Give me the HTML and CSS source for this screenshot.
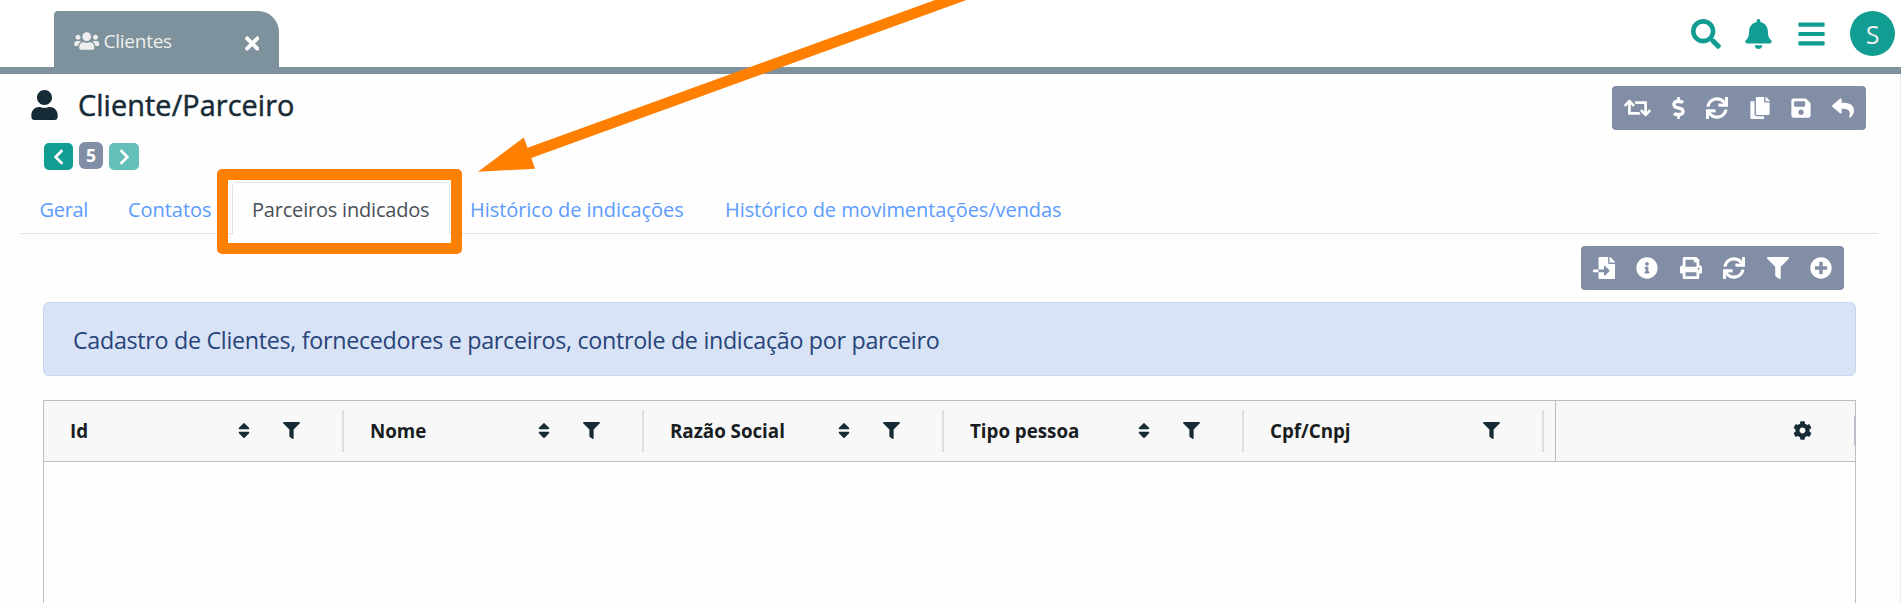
FILE: index.html
```html
<!DOCTYPE html>
<html lang="pt-BR">
<head>
<meta charset="utf-8">
<title>Cliente/Parceiro</title>
<link rel="stylesheet" href="styles.css">
</head>
<body>
<svg class="sprite" aria-hidden="true">
  <symbol id="users" viewBox="0 0 640 512"><path d="M96 224c35.3 0 64-28.7 64-64s-28.7-64-64-64-64 28.7-64 64 28.7 64 64 64zm448 0c35.3 0 64-28.7 64-64s-28.7-64-64-64-64 28.7-64 64 28.7 64 64 64zm32 32h-64c-17.6 0-33.5 7.1-45.1 18.6 40.3 22.1 68.9 62 75.1 109.4h66c17.7 0 32-14.3 32-32v-32c0-35.3-28.7-64-64-64zm-256 0c61.9 0 112-50.1 112-112S381.9 32 320 32 208 82.1 208 144s50.1 112 112 112zm76.8 32h-8.3c-20.8 10-43.9 16-68.5 16s-47.6-6-68.5-16h-8.3C179.6 288 128 339.6 128 403.2V432c0 26.500 21.500 48 48 48h288c26.500 0 48-21.500 48-48v-28.800c0-63.600-51.600-115.200-115.200-115.200zm-223.700-13.400C161.500 263.100 145.600 256 128 256H64c-35.300 0-64 28.700-64 64v32c0 17.700 14.300 32 32 32h65.900c6.300-47.400 34.900-87.300 75.200-109.400z"/></symbol>
  <symbol id="user" viewBox="0 0 448 512"><path d="M224 256c70.7 0 128-57.3 128-128S294.7 0 224 0 96 57.3 96 128s57.3 128 128 128zm89.6 32h-16.7c-22.2 10.2-46.9 16-72.9 16s-50.6-5.8-72.9-16h-16.7C60.2 288 0 348.2 0 422.4V464c0 26.5 21.5 48 48 48h352c26.5 0 48-21.5 48-48v-41.6c0-74.2-60.2-134.4-134.4-134.4z"/></symbol>
  <symbol id="times" viewBox="0 0 352 512"><path d="M242.72 256l100.07-100.07c12.28-12.28 12.28-32.19 0-44.48l-22.24-22.24c-12.28-12.28-32.19-12.28-44.48 0L176 189.28 75.93 89.21c-12.28-12.28-32.19-12.28-44.48 0L9.21 111.45c-12.28 12.28-12.28 32.19 0 44.48L109.28 256 9.21 356.07c-12.28 12.28-12.28 32.19 0 44.48l22.24 22.24c12.28 12.28 32.2 12.28 44.48 0L176 322.72l100.07 100.07c12.28 12.28 32.2 12.28 44.48 0l22.24-22.24c12.28-12.28 12.28-32.19 0-44.48L242.72 256z"/></symbol>
  <symbol id="search" viewBox="0 0 512 512"><path d="M505 442.7L405.3 343c-4.5-4.5-10.6-7-17-7H372c27.6-35.3 44-79.7 44-128C416 93.1 322.9 0 208 0S0 93.1 0 208s93.1 208 208 208c48.3 0 92.700-16.400 128-44v16.300c0 6.400 2.500 12.500 7 17l99.700 99.700c9.400 9.400 24.600 9.400 33.900 0l28.300-28.300c9.400-9.400 9.400-24.600.1-34zM208 336c-70.700 0-128-57.200-128-128 0-70.700 57.200-128 128-128 70.700 0 128 57.200 128 128 0 70.700-57.200 128-128 128z"/></symbol>
  <symbol id="bell" viewBox="0 0 448 512"><path d="M224 512c35.320 0 63.970-28.650 63.970-64H160.030c0 35.350 28.650 64 63.970 64zm215.390-149.710c-19.320-20.760-55.470-51.990-55.470-154.290 0-77.700-54.480-139.900-127.940-155.160V32c0-17.670-14.320-32-31.980-32s-31.980 14.330-31.980 32v20.840C118.560 68.100 64.080 130.300 64.080 208c0 102.300-36.150 133.530-55.470 154.290-6 6.450-8.660 14.160-8.610 21.710.11 16.400 12.980 32 32.100 32h383.800c19.120 0 32-15.600 32.100-32 .05-7.550-2.610-15.270-8.610-21.710z"/></symbol>
  <symbol id="bars" viewBox="0 0 448 512"><path d="M16 132h416c8.840 0 16-7.160 16-16V76c0-8.840-7.160-16-16-16H16C7.160 60 0 67.160 0 76v40c0 8.840 7.160 16 16 16zm0 160h416c8.840 0 16-7.160 16-16v-40c0-8.840-7.160-16-16-16H16c-8.840 0-16 7.160-16 16v40c0 8.840 7.160 16 16 16zm0 160h416c8.840 0 16-7.160 16-16v-40c0-8.840-7.160-16-16-16H16c-8.840 0-16 7.160-16 16v40c0 8.840 7.160 16 16 16z"/></symbol>
  <symbol id="retweet" viewBox="0 0 640 512"><path d="M629.657 343.598L528.971 444.284c-9.373 9.372-24.568 9.372-33.941 0L394.343 343.598c-9.373-9.373-9.373-24.569 0-33.941l10.823-10.823c9.562-9.562 25.133-9.340 34.419.492L480 342.118V160H292.451a24.005 24.005 0 0 1-16.971-7.029l-16-16C244.361 121.851 255.069 96 276.451 96H520c13.255 0 24 10.745 24 24v222.118l40.416-42.792c9.285-9.831 24.856-10.054 34.419-.492l10.823 10.823c9.372 9.372 9.372 24.569-.001 33.941zm-265.138 15.431A23.999 23.999 0 0 0 347.548 352H160V169.881l40.416 42.792c9.286 9.831 24.856 10.054 34.419.491l10.822-10.822c9.373-9.373 9.373-24.569 0-33.941L144.971 67.716c-9.373-9.373-24.569-9.373-33.941 0L10.343 168.402c-9.373 9.373-9.373 24.569 0 33.941l10.822 10.822c9.562 9.562 25.133 9.340 34.419-.491L96 169.881V392c0 13.255 10.745 24 24 24h243.549c21.382 0 32.090-25.851 16.971-40.971l-16.001-16z"/></symbol>
  <symbol id="dollar" viewBox="0 0 288 512"><path d="M209.2 233.4l-108-31.6C88.700 198.200 80 186.500 80 173.500c0-16.300 13.200-29.500 29.500-29.500h66.300c12.200 0 24.200 3.700 34.200 10.500 6.100 4.100 14.300 3.100 19.500-2l34.800-34c7.100-6.900 6.100-18.400-1.800-24.500C238 74.800 207.400 64.100 176 64V16c0-8.800-7.200-16-16-16h-32c-8.800 0-16 7.200-16 16v48h-2.500C45.800 64-5.400 118.700.5 183.600c4.200 46.100 39.400 83.600 83.800 96.600l102.500 30c12.500 3.700 21.200 15.300 21.200 28.300 0 16.300-13.200 29.500-29.500 29.500h-66.300C100 368 88 364.300 78 357.500c-6.100-4.100-14.300-3.100-19.500 2l-34.800 34c-7.100 6.900-6.100 18.400 1.800 24.500 24.500 19.200 55.100 29.900 86.500 30v48c0 8.800 7.200 16 16 16h32c8.800 0 16-7.200 16-16v-48.200c46.600-.9 90.300-28.600 105.700-72.700 21.500-61.600-14.600-124.800-72.500-141.700z"/></symbol>
  <symbol id="sync" viewBox="0 0 512 512"><path d="M440.65 12.57l4 82.77A247.16 247.16 0 0 0 255.83 8C134.73 8 33.91 94.92 12.29 209.82A12 12 0 0 0 24.09 224h49.05a12 12 0 0 0 11.67-9.26 175.91 175.91 0 0 1 317-56.94l-101.46-4.86a12 12 0 0 0-12.57 12v47.41a12 12 0 0 0 12 12H500a12 12 0 0 0 12-12V12a12 12 0 0 0-12-12h-47.37a12 12 0 0 0-11.98 12.57zM255.83 432a175.61 175.61 0 0 1-146-77.8l101.8 4.87a12 12 0 0 0 12.57-12v-47.4a12 12 0 0 0-12-12H12a12 12 0 0 0-12 12V500a12 12 0 0 0 12 12h47.35a12 12 0 0 0 12-12.6l-4.15-82.57A247.17 247.17 0 0 0 255.83 504c121.11 0 221.93-86.92 243.55-201.82a12 12 0 0 0-11.8-14.18h-49.05a12 12 0 0 0-11.67 9.26A175.86 175.86 0 0 1 255.83 432z"/></symbol>
  <symbol id="copy" viewBox="0 0 448 512"><path d="M320 448v40c0 13.255-10.745 24-24 24H24c-13.255 0-24-10.745-24-24V120c0-13.255 10.745-24 24-24h72v296c0 30.879 25.121 56 56 56h168zm0-344V0H152c-13.255 0-24 10.745-24 24v368c0 13.255 10.745 24 24 24h272c13.255 0 24-10.745 24-24V128H344c-13.200 0-24-10.800-24-24zm120.971-31.029L375.029 7.029A24 24 0 0 0 358.059 0H352v96h96v-6.059a24 24 0 0 0-7.029-16.970z"/></symbol>
  <symbol id="save" viewBox="0 0 448 512"><path d="M433.941 129.941l-83.882-83.882A48 48 0 0 0 316.118 32H48C21.490 32 0 53.490 0 80v352c0 26.510 21.490 48 48 48h352c26.510 0 48-21.490 48-48V163.882a48 48 0 0 0-14.059-33.941zM224 416c-35.346 0-64-28.654-64-64 0-35.346 28.654-64 64-64s64 28.654 64 64c0 35.346-28.654 64-64 64zm96-304.520V212c0 6.627-5.373 12-12 12H76c-6.627 0-12-5.373-12-12V108c0-6.627 5.373-12 12-12h228.520c3.183 0 6.235 1.264 8.485 3.515l3.480 3.480A11.996 11.996 0 0 1 320 111.480z"/></symbol>
  <symbol id="reply" viewBox="0 0 512 512"><path d="M8.309 189.836L184.313 37.851C199.719 24.546 224 35.347 224 56.015v80.053c160.629 1.839 288 34.032 288 186.258 0 61.441-39.581 122.309-83.333 154.132-13.653 9.931-33.111-2.533-28.077-18.631 45.344-145.012-21.507-183.510-176.590-185.742V360c0 20.700-24.300 31.453-39.687 18.164l-176.004-152c-11.071-9.562-11.086-26.753 0-36.328z"/></symbol>
  <symbol id="import" viewBox="0 0 512 512"><path d="M16 288c-8.800 0-16 7.200-16 16v32c0 8.800 7.200 16 16 16h112v-64zm489-183L407.100 7c-4.500-4.500-10.600-7-17-7H384v128h128v-6.100c0-6.300-2.500-12.400-7-16.900zm-153 31V0H152c-13.300 0-24 10.700-24 24v264h128v-65.200c0-14.300 17.300-21.400 27.400-11.300L379 308c6.600 6.700 6.600 17.400 0 24l-95.700 96.400c-10.100 10.100-27.400 3-27.400-11.300V352H128v136c0 13.300 10.700 24 24 24h336c13.300 0 24-10.700 24-24V160H376c-13.200 0-24-10.800-24-24z"/></symbol>
  <symbol id="info" viewBox="0 0 512 512"><path d="M256 8C119.043 8 8 119.083 8 256c0 136.997 111.043 248 248 248s248-111.003 248-248C504 119.083 392.957 8 256 8zm0 110c23.196 0 42 18.804 42 42s-18.804 42-42 42-42-18.804-42-42 18.804-42 42-42zm56 254c0 6.627-5.373 12-12 12h-88c-6.627 0-12-5.373-12-12v-24c0-6.627 5.373-12 12-12h12v-64h-12c-6.627 0-12-5.373-12-12v-24c0-6.627 5.373-12 12-12h64c6.627 0 12 5.373 12 12v100h12c6.627 0 12 5.373 12 12v24z"/></symbol>
  <symbol id="print" viewBox="0 0 512 512"><path d="M448 192V77.250c0-8.490-3.370-16.620-9.370-22.630L393.370 9.370c-6-6-14.140-9.370-22.630-9.370H96C78.330 0 64 14.330 64 32v160c-35.350 0-64 28.650-64 64v112c0 8.840 7.160 16 16 16h48v96c0 17.670 14.330 32 32 32h320c17.670 0 32-14.330 32-32v-96h48c8.840 0 16-7.160 16-16V256c0-35.350-28.650-64-64-64zm-64 256H128v-96h256v96zm0-224H128V64h192v48c0 8.840 7.160 16 16 16h48v96zm48 72c-13.250 0-24-10.750-24-24 0-13.260 10.750-24 24-24s24 10.740 24 24c0 13.250-10.750 24-24 24z"/></symbol>
  <symbol id="filter" viewBox="0 0 512 512"><path d="M487.976 0H24.028C2.710 0-8.047 25.866 7.058 40.971L192 225.941V432c0 7.831 3.821 15.170 10.237 19.662l80 55.980C298.020 518.690 320 507.493 320 487.980V225.941l184.947-184.970C520.021 25.896 509.338 0 487.976 0z"/></symbol>
  <symbol id="plus" viewBox="0 0 512 512"><path d="M256 8C119 8 8 119 8 256s111 248 248 248 248-111 248-248S393 8 256 8zm144 276c0 6.600-5.400 12-12 12h-92v92c0 6.600-5.400 12-12 12h-56c-6.600 0-12-5.400-12-12v-92h-92c-6.600 0-12-5.400-12-12v-56c0-6.600 5.400-12 12-12h92v-92c0-6.600 5.400-12 12-12h56c6.600 0 12 5.400 12 12v92h92c6.600 0 12 5.400 12 12v56z"/></symbol>
  <symbol id="sort" viewBox="0 0 320 512"><path d="M41 288h238c21.400 0 32.100 25.900 17 41L177 448c-9.400 9.400-24.600 9.400-33.900 0L24 329c-15.100-15.100-4.400-41 17-41zm255-105L177 64c-9.400-9.400-24.600-9.400-33.900 0L24 183c-15.100 15.100-4.400 41 17 41h238c21.400 0 32.100-25.900 17-41z"/></symbol>
  <symbol id="chevron" viewBox="0 0 320 512"><path d="M34.520 239.030L228.870 44.690c9.370-9.370 24.570-9.370 33.940 0l22.670 22.670c9.360 9.360 9.370 24.520.04 33.900L131.490 256l154.020 154.750c9.340 9.380 9.320 24.540-.04 33.900l-22.670 22.670c-9.370 9.370-24.570 9.370-33.940 0L34.520 272.970c-9.370-9.370-9.370-24.570 0-33.940z"/></symbol>
  <symbol id="cog" viewBox="0 0 512 512"><path d="M487.400 315.700l-42.600-24.600c4.300-23.200 4.300-47 0-70.200l42.600-24.600c4.900-2.800 7.100-8.600 5.500-14-11.100-35.600-30-67.800-54.700-94.600-3.800-4.100-10-5.100-14.800-2.300L380.800 110c-17.900-15.400-38.500-27.300-60.800-35.100V25.800c0-5.600-3.900-10.500-9.400-11.700-36.700-8.200-74.300-7.800-109.200 0-5.500 1.200-9.400 6.100-9.400 11.700V75c-22.200 7.900-42.800 19.800-60.800 35.100L88.700 85.500c-4.900-2.800-11-1.900-14.800 2.300-24.700 26.700-43.600 58.900-54.700 94.600-1.700 5.400.6 11.200 5.500 14L67.300 221c-4.300 23.200-4.300 47 0 70.200l-42.600 24.600c-4.900 2.800-7.100 8.600-5.500 14 11.100 35.600 30 67.800 54.700 94.600 3.800 4.100 10 5.100 14.800 2.300l42.600-24.600c17.900 15.400 38.500 27.300 60.800 35.100v49.200c0 5.600 3.900 10.500 9.400 11.700 36.700 8.200 74.300 7.800 109.200 0 5.500-1.200 9.400-6.100 9.400-11.700v-49.200c22.200-7.900 42.800-19.800 60.800-35.100l42.600 24.600c4.900 2.800 11 1.900 14.800-2.300 24.700-26.700 43.600-58.900 54.700-94.600 1.500-5.500-.7-11.300-5.600-14.100zM256 336c-44.100 0-80-35.900-80-80s35.900-80 80-80 80 35.900 80 80-35.900 80-80 80z"/></symbol>
</svg>

<header class="topbar">
  <div class="window-tab">
    <svg class="icon window-tab-icon"><use href="#users"/></svg>
    <span class="window-tab-label">Clientes</span>
    <svg class="icon window-tab-close"><use href="#times"/></svg>
  </div>
  <nav class="top-actions">
    <svg class="icon top-search"><use href="#search"/></svg>
    <svg class="icon top-bell"><use href="#bell"/></svg>
    <svg class="icon top-bars"><use href="#bars"/></svg>
    <span class="avatar">S</span>
  </nav>
</header>

<main class="page">
  <div class="title-row">
    <svg class="icon title-icon"><use href="#user"/></svg>
    <h1 class="title">Cliente/Parceiro</h1>
    <div class="toolbar record-tools">
      <svg class="icon wide"><use href="#retweet"/></svg>
      <svg class="icon slim"><use href="#dollar"/></svg>
      <svg class="icon"><use href="#sync"/></svg>
      <svg class="icon mid"><use href="#copy"/></svg>
      <svg class="icon mid"><use href="#save"/></svg>
      <svg class="icon"><use href="#reply"/></svg>
    </div>
  </div>

  <div class="pager">
    <span class="pager-btn"><svg class="icon"><use href="#chevron"/></svg></span>
    <span class="pager-num">5</span>
    <span class="pager-btn next"><svg class="icon"><use href="#chevron"/></svg></span>
  </div>

  <nav class="tabs">
    <a class="tab geral">Geral</a>
    <a class="tab contatos">Contatos</a>
    <a class="tab active">Parceiros indicados</a>
    <a class="tab indicacoes">Histórico de indicações</a>
    <a class="tab vendas">Histórico de movimentações/vendas</a>
  </nav>

  <section class="panel">
    <div class="toolbar list-tools">
      <svg class="icon"><use href="#import"/></svg>
      <svg class="icon"><use href="#info"/></svg>
      <svg class="icon"><use href="#print"/></svg>
      <svg class="icon"><use href="#sync"/></svg>
      <svg class="icon"><use href="#filter"/></svg>
      <svg class="icon"><use href="#plus"/></svg>
    </div>

    <div class="notice">Cadastro de Clientes, fornecedores e parceiros, controle de indicação por parceiro</div>

    <div class="grid">
      <div class="grid-head">
        <div class="col"><span class="col-name">Id</span><svg class="icon sort"><use href="#sort"/></svg><svg class="icon funnel"><use href="#filter"/></svg></div>
        <div class="col"><span class="col-name">Nome</span><svg class="icon sort"><use href="#sort"/></svg><svg class="icon funnel"><use href="#filter"/></svg></div>
        <div class="col"><span class="col-name">Razão Social</span><svg class="icon sort"><use href="#sort"/></svg><svg class="icon funnel"><use href="#filter"/></svg></div>
        <div class="col"><span class="col-name">Tipo pessoa</span><svg class="icon sort"><use href="#sort"/></svg><svg class="icon funnel"><use href="#filter"/></svg></div>
        <div class="col"><span class="col-name">Cpf/Cnpj</span><svg class="icon funnel"><use href="#filter"/></svg></div>
        <div class="col-pinned"><svg class="icon cog"><use href="#cog"/></svg><span class="resize"></span></div>
      </div>
      <div class="grid-body"></div>
    </div>
  </section>
</main>

<div class="highlight"></div>
<svg class="arrow" viewBox="0 0 1901 603"><path d="M478 171.800L523.800 137.400L527.600 147.800L932.300 1L935 0H966.500L531.400 158L535 168.800Z"/></svg>
</body>
</html>
```

FILE: styles.css
```css
* { box-sizing: border-box; }

body {
  margin: 0;
  width: 1901px;
  height: 603px;
  overflow: hidden;
  position: relative;
  display: flex;
  flex-direction: column;
  background: #fff;
  color: #172b36;
  font-family: "Open Sans", "Noto Sans", sans-serif;
}

.sprite { position: absolute; width: 0; height: 0; }
.icon { display: block; flex: none; width: 22px; height: 22px; fill: currentColor; }

/* Top bar */
.topbar {
  flex: none;
  height: 74px;
  border-bottom: 7px solid #7d929c;
  padding: 11px 6px 0 54px;
  display: flex;
  justify-content: space-between;
  align-items: flex-start;
}
.window-tab {
  width: 225px;
  height: 56px;
  padding: 3px 20px 0;
  border-radius: 4px 21px 0 0;
  background: #7d929c;
  color: #eee;
  display: flex;
  align-items: center;
}
.window-tab-icon { width: 25.500px; height: 20px; }
.window-tab-label { margin-left: 4px; font-size: 19px; line-height: 26px; letter-spacing: -0.25px; }
.window-tab-close { margin: 6px 0 0 auto; width: 14.500px; height: 21px; color: #fff; }
.top-actions { display: flex; align-items: center; height: 45px; color: #129d92; }
.top-search { width: 30px; height: 30px; }
.top-bell { width: 27px; height: 30px; margin-left: 24px; }
.top-bars { width: 27px; height: 30px; margin-left: 26px; }
.avatar {
  width: 45px;
  height: 45px;
  margin-left: 25px;
  border-radius: 50%;
  background: #129d92;
  color: #eee;
  font-size: 25px;
  line-height: 47px;
  text-align: center;
}

/* Page heading */
.page { flex: 1; background: #fefefe; border-right: 1px solid #eee; }
.title-row { display: flex; height: 68px; padding: 12px 34px 0 31px; align-items: flex-start; }
.title-icon { width: 27px; height: 30px; margin-top: 4px; }
.title {
  margin: 0 0 0 20px;
  font-size: 28.800px;
  font-weight: 500;
  line-height: 37px;
  letter-spacing: 0.1px;
  -webkit-text-stroke: 0.5px currentColor;
}
.toolbar {
  height: 44px;
  border-radius: 4px;
  background: #828ea5;
  color: #fff;
  display: flex;
  align-items: center;
  justify-content: space-between;
}
.record-tools { width: 254px; margin-left: auto; padding: 0 11.500px; }
.toolbar .wide { width: 27px; }
.toolbar .slim { width: 13px; }
.toolbar .mid { width: 20px; }

.pager { display: flex; gap: 6px; height: 28px; padding-left: 44px; }
.pager-btn {
  width: 29px;
  height: 27px;
  margin-top: 1px;
  border-radius: 5px;
  background: #129d92;
  color: #fff;
  display: flex;
  align-items: center;
  justify-content: center;
}
.pager-btn .icon { width: 11px; height: 18px; }
.pager-btn.next { width: 30px; background: #64bfb8; }
.pager-btn.next .icon { transform: scaleX(-1); }
.pager-num {
  width: 24px;
  height: 27px;
  border-radius: 6px;
  background: #828ea5;
  color: #fff;
  font-size: 17.500px;
  font-weight: 700;
  line-height: 27px;
  text-align: center;
}

/* Section tabs */
.tabs {
  display: flex;
  height: 52px;
  margin: 12px 22px 0 20px;
  border-bottom: 1px solid #dee2e6;
}
.tab {
  height: 52px;
  padding: 1px 0 0 18px;
  border: 1px solid transparent;
  border-bottom: 0;
  font-size: 20px;
  line-height: 51px;
  letter-spacing: -0.05px;
  white-space: nowrap;
  color: #5c9cff;
}
.tab.geral { width: 89px; padding-left: 18.500px; letter-spacing: -0.3px; }
.tab.contatos { width: 123px; letter-spacing: -0.05px; }
.tab.active {
  width: 218px;
  padding-left: 19px;
  border-color: #dee2e6;
  border-radius: 5px 5px 0 0;
  background: #fefefe;
  color: #495057;
  letter-spacing: -0.2px;
}
.tab.indicacoes { width: 254px; padding-left: 19px; }
.tab.vendas { padding-left: 20px; letter-spacing: -0.08px; }

/* List panel */
.panel { padding: 12px 44px 0 43px; }
.list-tools { width: 263px; margin: 0 12px 0 auto; padding: 0 12px; }
.notice {
  height: 74px;
  margin-top: 12px;
  padding: 2px 29px 0;
  border: 1px solid #c8d5f1;
  border-radius: 6px;
  background: #d8e3f5;
  color: #27447a;
  font-size: 23.300px;
  line-height: 71px;
  letter-spacing: -0.31px;
  white-space: nowrap;
}
.grid { margin-top: 24px; height: 203px; border: 1px solid #babfc7; border-bottom: 0; }
.grid-head {
  display: flex;
  height: 61px;
  background: #f8f8f8;
  border-bottom: 1px solid #babfc7;
}
.col {
  width: 300px;
  height: 42px;
  margin-top: 9px;
  padding: 0 42px 0 26px;
  border-right: 2px solid #dbdee2;
  display: flex;
  align-items: center;
}
.col-name {
  margin-right: auto;
  font-size: 18.800px;
  font-weight: 700;
  line-height: 26px;
  letter-spacing: -0.03px;
  color: #181d1f;
}
.sort { width: 12px; height: 19px; margin: 0 33px 1px 0; }
.funnel { width: 17px; height: 17px; margin-bottom: 1px; }
.col-pinned {
  flex: 1;
  margin-left: 11px;
  border-left: 1px solid #babfc7;
  display: flex;
  align-items: center;
  justify-content: flex-end;
}
.cog { width: 19px; height: 19px; margin-bottom: 1px; }
.resize { width: 1px; height: 30px; margin-left: 42px; background: #babfc7; }

/* Callout drawn over the page */
.highlight {
  position: absolute;
  left: 217px;
  top: 169px;
  width: 245px;
  height: 85px;
  border: 11px solid #ff8000;
  border-radius: 5px;
}
.arrow { position: absolute; left: 0; top: 0; width: 1901px; height: 603px; fill: #ff8000; pointer-events: none; }
```
